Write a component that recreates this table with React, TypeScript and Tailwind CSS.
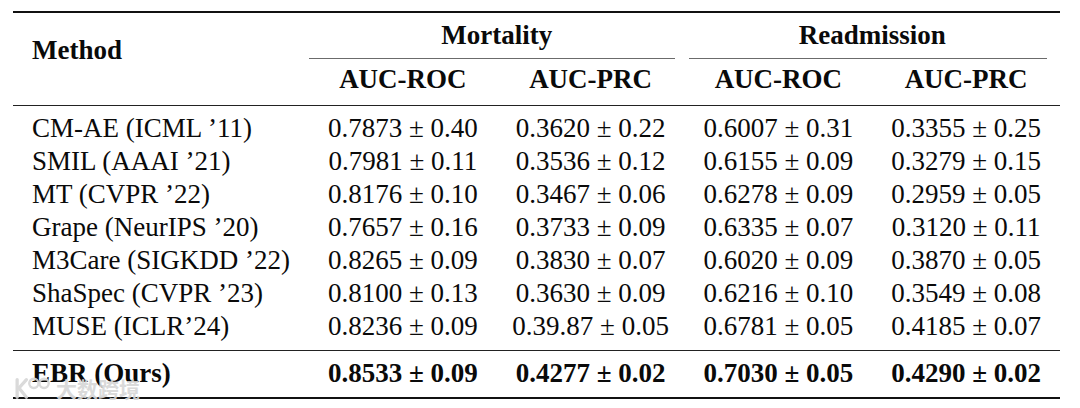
import React from "react";

const rows: [string, string, string, string, string][] = [
  ["CM-AE (ICML ’11)", "0.7873 ± 0.40", "0.3620 ± 0.22", "0.6007 ± 0.31", "0.3355 ± 0.25"],
  ["SMIL (AAAI ’21)", "0.7981 ± 0.11", "0.3536 ± 0.12", "0.6155 ± 0.09", "0.3279 ± 0.15"],
  ["MT (CVPR ’22)", "0.8176 ± 0.10", "0.3467 ± 0.06", "0.6278 ± 0.09", "0.2959 ± 0.05"],
  ["Grape (NeurIPS ’20)", "0.7657 ± 0.16", "0.3733 ± 0.09", "0.6335 ± 0.07", "0.3120 ± 0.11"],
  ["M3Care (SIGKDD ’22)", "0.8265 ± 0.09", "0.3830 ± 0.07", "0.6020 ± 0.09", "0.3870 ± 0.05"],
  ["ShaSpec (CVPR ’23)", "0.8100 ± 0.13", "0.3630 ± 0.09", "0.6216 ± 0.10", "0.3549 ± 0.08"],
  ["MUSE (ICLR’24)", "0.8236 ± 0.09", "0.39.87 ± 0.05", "0.6781 ± 0.05", "0.4185 ± 0.07"],
];

const ours: [string, string, string, string, string] = [
  "EBR (Ours)",
  "0.8533 ± 0.09",
  "0.4277 ± 0.02",
  "0.7030 ± 0.05",
  "0.4290 ± 0.02",
];

function Row({ cells, bold }: { cells: string[]; bold?: boolean }) {
  return (
    <div className={`grid grid-cols-[296px_repeat(4,1fr)] h-[33px] items-center leading-[33px] ${bold ? "font-bold" : ""}`}>
      <div className="pl-[19px] whitespace-nowrap">{cells[0]}</div>
      {cells.slice(1).map((c, i) => (
        <div key={i} className="text-center whitespace-nowrap">
          {c}
        </div>
      ))}
    </div>
  );
}

export default function App() {
  return (
    <div className="relative w-[1080px] h-[408px] bg-white text-[#0a0a0a] font-['Liberation_Serif',serif] text-[27px] overflow-hidden">
      <div className="ml-[13px] pt-[11px] w-[1047px]">
        <div className="h-[2px] bg-[#111]" />
        <div className="grid grid-cols-[296px_repeat(4,1fr)] grid-rows-[45px_1px_46px] font-bold">
          <div className="row-span-3 pl-[19px] pt-[21px] leading-[33px]">Method</div>
          <div className="col-span-2 flex items-center justify-center leading-[33px] pb-[1px]">Mortality</div>
          <div className="col-span-2 flex items-center justify-center leading-[33px] pb-[1px]">Readmission</div>
          <div className="col-span-2 flex">
            <div className="flex-1 mr-[10px] bg-[#6b6b6b]" />
          </div>
          <div className="col-span-2 flex">
            <div className="flex-1 ml-[4px] mr-[13px] bg-[#6b6b6b]" />
          </div>
          <div className="text-center pt-[4px] leading-[33px]">AUC-ROC</div>
          <div className="text-center pt-[4px] leading-[33px]">AUC-PRC</div>
          <div className="text-center pt-[4px] leading-[33px]">AUC-ROC</div>
          <div className="text-center pt-[4px] leading-[33px]">AUC-PRC</div>
        </div>
        <div className="h-[1px] bg-[#222]" />
        <div className="pt-[6px] pb-[7px]">
          {rows.map((r, i) => (
            <Row key={i} cells={r} />
          ))}
        </div>
        <div className="h-[1px] bg-[#222]" />
        <div className="pt-[6px] pb-[7px]">
          <Row cells={ours} bold />
        </div>
        <div className="h-[2px] bg-[#111]" />
      </div>
      <div className="absolute left-[12px] top-[375px] flex items-center gap-[4px] opacity-90">
        <svg width="40" height="26" viewBox="0 0 42 28" fill="none">
          <path d="M5 5 L5 24" stroke="#d6d6d6" strokeWidth="3.5" strokeLinecap="round" />
          <path d="M15 5 L7 14 L15 24" stroke="#d6d6d6" strokeWidth="3.5" strokeLinecap="round" strokeLinejoin="round" />
          <circle cx="23" cy="9" r="5" stroke="#d6d6d6" strokeWidth="2.5" />
          <circle cx="34" cy="9" r="5" stroke="#d6d6d6" strokeWidth="2.5" />
        </svg>
        <span className="text-[21px] leading-none text-[#d6d6d6] font-['Noto_Sans_CJK_SC',sans-serif] font-bold">
          大数跨境
        </span>
      </div>
    </div>
  );
}
